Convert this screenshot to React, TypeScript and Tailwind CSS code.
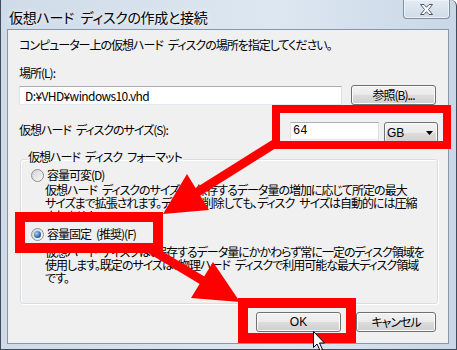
import React from "react";

const BTN =
  "flex items-center justify-center rounded-[3px] border border-[#707070] bg-[linear-gradient(#f2f2f2,#ebebeb_50%,#dddddd_50%,#cfcfcf)] shadow-[inset_0_0_0_1px_#fbfbfb] text-[12px] leading-[16px]";

function Radio({ checked }: { checked?: boolean }) {
  return (
    <div className="flex h-[13px] w-[13px] shrink-0 items-center justify-center rounded-full border border-[#8e8f8f] bg-[linear-gradient(135deg,#d2d2d2,#fafafa)]">
      {checked ? (
        <div className="h-[7px] w-[7px] rounded-full bg-[radial-gradient(circle_at_35%_35%,#a6d4f6,#2a6aa8_60%,#16406c)]" />
      ) : (
        <div className="h-[9px] w-[9px] rounded-full bg-[linear-gradient(135deg,#d6d6d6,#f6f6f6)]" />
      )}
    </div>
  );
}

const S = "\u2002";

export default function App() {
  return (
    <div className="relative h-[350px] w-[457px] overflow-hidden bg-white font-['Noto_Sans_CJK_JP',sans-serif] text-black [font-feature-settings:'palt']">
      <div className="flex h-[350px] w-[457px] flex-col rounded-tr-[6px] border-x border-b border-[#3f4c5e] bg-[linear-gradient(90deg,#cfdbe8,#dde7f1_60%,#c9d7e6)]">
        {/* title bar */}
        <div className="flex h-[29px] items-start">
          <div className="whitespace-pre pl-[8px] pt-[9px] text-[14px] leading-[16px] tracking-[-0.3px] [text-shadow:0_0_6px_#ffffff]">
            {`仮想ハード${S}ディスクの作成と接続`}
          </div>
          <div className="ml-auto mr-[6px] flex h-[19px] w-[47px] items-center justify-center rounded-b-[4px] border border-t-0 border-[#7f90a6] bg-[linear-gradient(#e4ebf3,#cfdbe8)] shadow-[inset_0_0_0_1px_#eef3f8]">
            <svg width="13" height="11" viewBox="0 0 13 11">
              <polygon
                points="0.5,0.5 4,0.5 6.5,3.3 9,0.5 12.5,0.5 8.5,5.5 12.5,10.5 9,10.5 6.5,7.7 4,10.5 0.5,10.5 4.5,5.5"
                fill="#ffffff"
                stroke="#4f5a69"
                strokeWidth="1"
                strokeLinejoin="round"
              />
            </svg>
          </div>
        </div>

        {/* client area */}
        <div className="ml-[6px] flex h-[315px] w-[442px] flex-col border border-[#8796ab] bg-[#f0f0f0] pl-[11px] pr-[10px] pt-[7px] text-[12px] leading-[16px] tracking-[-1px]">
          <div className="whitespace-nowrap">
            {`コンピューター上の仮想ハード${S}ディスクの場所を指定してください。`}
          </div>
          <div className="mt-[12px]">場所(L):</div>
          <div className="mt-[4px] flex items-center justify-between">
            <div className="h-[19px] w-[323px] border border-[#abadb3] border-b-[#e3e9ef] border-l-[#e2e3ea] border-r-[#dbdfe6] bg-white pl-[5px] leading-[17px] tracking-[-0.6px]">
              D:¥VHD¥windows10.vhd
            </div>
            <div className={`${BTN} mr-[2px] h-[20px] w-[85px]`}>参照(B)...</div>
          </div>

          <div className="mt-[17px] flex items-start">
            <div className="whitespace-nowrap">{`仮想ハード${S}ディスクのサイズ(S):`}</div>
            <div className="ml-auto h-[18px] w-[89px] border border-[#abadb3] border-b-[#e3e9ef] border-l-[#e2e3ea] border-r-[#dbdfe6] bg-white pl-[2px] font-['Liberation_Mono',monospace] leading-[16px] tracking-normal">
              64
            </div>
            <div className="ml-[5px] flex h-[21px] w-[54px] items-center rounded-[3px] border border-[#707070] bg-[linear-gradient(#f2f2f2,#ebebeb_50%,#dddddd_50%,#cfcfcf)] pl-[2px] pr-[4px] font-['Liberation_Sans',sans-serif] tracking-normal shadow-[inset_0_0_0_1px_#fbfbfb]">
              GB
              <svg className="ml-auto" width="7" height="4" viewBox="0 0 7 4">
                <polygon points="0,0 7,0 3.5,4" fill="#000" />
              </svg>
            </div>
          </div>

          <fieldset className="ml-[1px] mt-[7px] rounded-[3px] border border-[#d5dfe5] p-0 pb-[19px] shadow-[inset_1px_1px_0_#ffffff,1px_1px_0_#ffffff]">
            <legend className="ml-[6px] h-[18px] whitespace-nowrap px-[1px] leading-[14px]">
              {`仮想ハード${S}ディスク${S}フォーマット`}
            </legend>
            <div className="pl-[10px]">
              <div className="flex h-[14px] items-center gap-[3px]">
                <Radio />
                <span className="leading-[14px]">容量可変(D)</span>
              </div>
              <div className="ml-[14px] mt-[1px] whitespace-nowrap leading-[13px]">
                <div>{`仮想ハード${S}ディスクのサイズは、保存するデータ量の増加に応じて所定の最大`}</div>
                <div>{`サイズまで拡張されます。データを削除しても、ディスク${S}サイズは自動的には圧縮`}</div>
                <div>されません。</div>
              </div>
              <div className="mt-[5px] flex h-[14px] items-center gap-[3px]">
                <Radio checked />
                <span className="whitespace-nowrap leading-[14px]">{`容量固定${S}(推奨)(F)`}</span>
              </div>
              <div className="ml-[14px] mt-[4px] whitespace-nowrap leading-[13px]">
                <div>{`仮想ハード${S}ディスクは、保存するデータ量にかかわらず常に一定のディスク領域を`}</div>
                <div>{`使用します。既定のサイズは、物理ハード${S}ディスクで利用可能な最大ディスク領域`}</div>
                <div>です。</div>
              </div>
            </div>
          </fieldset>

          <div className="mt-[8px] flex justify-end">
            <div className={`${BTN} h-[20px] w-[85px] font-['Liberation_Sans',sans-serif] tracking-normal`}>OK</div>
            <div className={`${BTN} ml-[15px] mr-[2px] h-[20px] w-[80px]`}>キャンセル</div>
          </div>
        </div>
      </div>

      {/* annotation overlays */}
      <div className="absolute left-[272px] top-[105px] h-[44px] w-[179px] border-[8px] border-[#ff0000]" />
      <div className="absolute left-[15px] top-[212px] h-[41px] w-[148px] border-[10px] border-[#ff0000]" />
      <div className="absolute left-[238px] top-[298px] h-[45px] w-[118px] border-[10px] border-[#ff0000]" />

      <svg className="pointer-events-none absolute left-0 top-0" width="457" height="350" viewBox="0 0 457 350">
        <line x1="274" y1="144" x2="196" y2="193" stroke="#ff0000" strokeWidth="9" />
        <polygon points="163,214 209,210 187,174" fill="#ff0000" />
        <line x1="150" y1="249" x2="205" y2="282" stroke="#ff0000" strokeWidth="9" />
        <polygon points="240,302 191,298 213,262" fill="#ff0000" />
        {/* mouse cursor */}
        <path
          d="M313.5,331.5 L313.5,347.5 L317,344 L320,350.5 L322.5,349.5 L319.5,343 L324.5,343 Z"
          fill="#ffffff"
          stroke="#000000"
          strokeWidth="1"
        />
      </svg>
    </div>
  );
}
